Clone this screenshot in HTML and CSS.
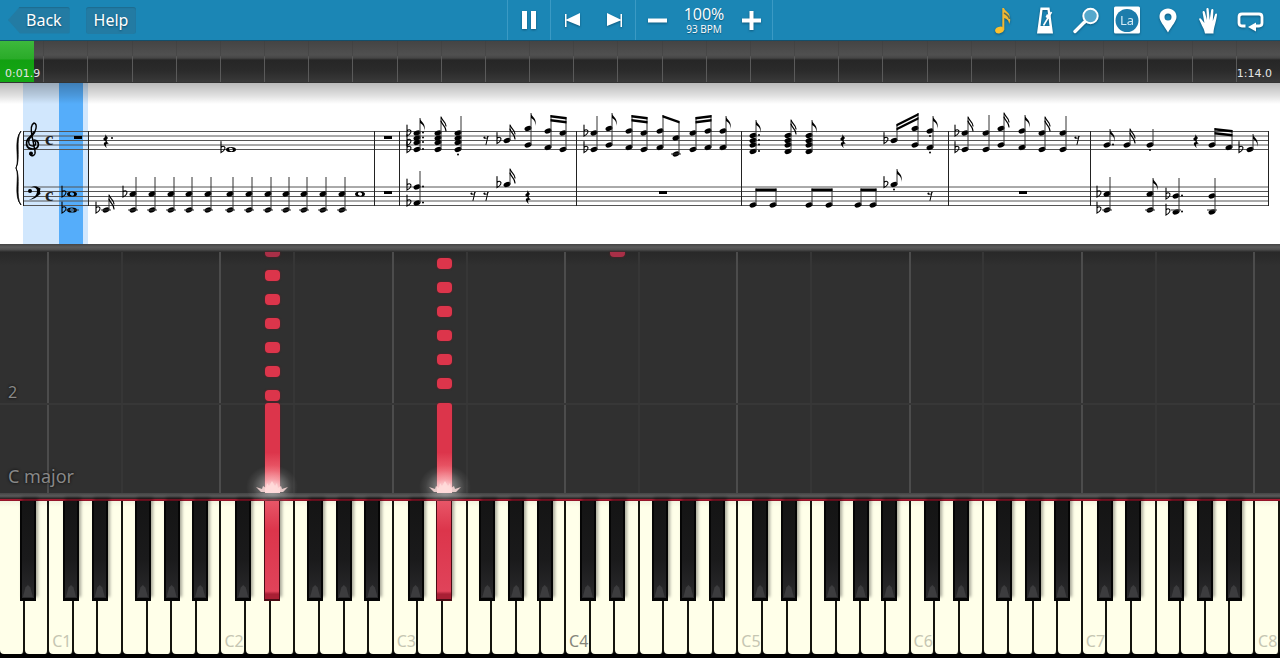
FILE: index.html
```html
<!DOCTYPE html>
<html lang="en">
<head>
	<meta charset="UTF-8">
	<meta name="viewport" content="width=device-width, initial-scale=1.0">
	<title>Piano player</title>
	<link rel="stylesheet" href="styles.css">
</head>
<body>
	<header class="toolbar">
		<div class="nav">
			<button class="nav-button back">Back</button>
			<button class="nav-button">Help</button>
		</div>
		<div class="transport">
			<div class="group">
				<button class="icon-button" aria-label="Pause">
					<svg width="24" height="24" viewBox="0 0 24 24"><path d="M5 3h5v18H5zM14 3h5v18h-5z"/></svg>
				</button>
			</div>
			<div class="group">
				<button class="icon-button" aria-label="Previous">
					<svg width="24" height="24" viewBox="0 0 24 24"><path d="M5 6h1.500v5.500L20 5v13L6.500 12.500V19H5z"/></svg>
				</button>
				<button class="icon-button" aria-label="Next">
					<svg width="24" height="24" viewBox="0 0 24 24"><path d="M20 6h-1.500v5.500L5 5v13l13.500-5.500V19H20z"/></svg>
				</button>
			</div>
			<div class="group tempo">
				<button class="icon-button" aria-label="Slower">
					<svg width="24" height="24" viewBox="0 0 24 24"><path d="M3 10.500h19v4H3z"/></svg>
				</button>
				<div class="tempo-value">
					<span class="percent">100%</span>
					<span class="bpm">93 BPM</span>
				</div>
				<button class="icon-button" aria-label="Faster">
					<svg width="24" height="24" viewBox="0 0 24 24"><path d="M3 10.500h7.500V3h4v7.500H22v4h-7.500V22h-4v-7.500H3z"/></svg>
				</button>
			</div>
		</div>
		<div class="tools">
			<button class="icon-button" aria-label="Notes">
				<svg width="28" height="30" viewBox="0 0 28 30">
					<ellipse cx="9.500" cy="25" rx="4.500" ry="3.200" transform="rotate(-20 9.500 25)" fill="#fbc02d"/>
					<path d="M12.300 25V3h1.700c.5 3 6 4.500 5.700 9 1 3 .5 5-.7 7 .2-3-1.500-5-4.700-6v12z" fill="#f0b732"/>
					<path d="M14 8c3 1.500 5 3 5.500 6" fill="none" stroke="#5c7052" stroke-width="1.500"/>
				</svg>
			</button>
			<button class="icon-button" aria-label="Metronome">
				<svg width="28" height="30" viewBox="0 0 28 30">
					<path fill-rule="evenodd" d="M9.500 2.500h9L22 28.500H6zM11.500 5l-2 16h9l-2-16z"/>
					<path d="M12.500 20.500L20.500 7" stroke="#fff" stroke-width="1.600"/>
					<path d="M16 9l3.500 2.500-2 2.500-3-2z"/>
				</svg>
			</button>
			<button class="icon-button" aria-label="Zoom">
				<svg width="28" height="30" viewBox="0 0 28 30">
					<circle cx="18.500" cy="11" r="7.200" fill="#56a8cc" stroke="#fff" stroke-width="2"/>
					<path d="M12.500 17L3 26.500" stroke="#fff" stroke-width="3.400" stroke-linecap="round"/>
				</svg>
			</button>
			<button class="icon-button" aria-label="Note names">
				<svg width="28" height="30" viewBox="0 0 28 30">
					<rect x="1" y="1.500" width="26" height="27" rx="1.500"/>
					<circle cx="14" cy="15.500" r="11.500" fill="#1d7cab"/>
					<text x="14" y="20" class="la">La</text>
				</svg>
			</button>
			<button class="icon-button" aria-label="Marker">
				<svg width="28" height="30" viewBox="0 0 28 30">
					<path fill-rule="evenodd" d="M14 3.500c5 0 8.500 3.600 8.500 8.300 0 4.500-4.500 8.700-8.500 15.700-4-7-8.500-11.200-8.500-15.700 0-4.700 3.500-8.300 8.500-8.300zM14 8.500a3.500 3.500 0 1 0 0 7 3.500 3.500 0 0 0 0-7z"/>
				</svg>
			</button>
			<button class="icon-button" aria-label="Hands">
				<svg width="28" height="30" viewBox="0 0 28 30">
					<path d="M10 28.500c-1-5-2.500-6.500-3.500-9L4.200 14.500c-.3-1.300 1.300-1.700 2-.6l3.200 4L7.600 7.500c-.2-1.600 1.700-2 2.200-.4l2.200 8-.6-10.700c0-1.800 2.100-1.800 2.300 0l1 10.500L16.200 5c.3-1.600 2.300-1.200 2.200.4L17.800 16l2.300-6.700c.6-1.300 2.200-.8 1.900.7-.8 5-1.500 8-2.500 11.500-.6 2.500-1 4.500-1 7z"/>
				</svg>
			</button>
			<button class="icon-button" aria-label="Loop">
				<svg width="28" height="30" viewBox="0 0 28 30">
					<path d="M9.500 21H6c-2 0-3-1-3-3v-6c0-2 1-3 3-3h17c2 0 3 1 3 3v6c0 2-1 3-3 3h-4" fill="none" stroke="#fff" stroke-width="2.800"/>
					<path d="M12 22l8-4.500v9z"/>
				</svg>
			</button>
		</div>
	</header>

	<div class="timeline">
		<input class="seek" type="range" min="0" max="740" value="19" aria-label="Position">
		<div class="ticks" id="ticks"></div>
		<div class="times">
			<span>0:01.9</span>
			<span>1:14.0</span>
		</div>
	</div>

	<main class="player">
		<div class="score">
			<svg id="score" viewBox="0 83 1280 161" role="img" aria-label="Score"></svg>
		</div>
		<div class="divider"></div>
		<div class="roll" id="roll">
			<div class="lanes" id="lanes"></div>
			<div class="measure"><span>2</span></div>
			<div class="key-name">C major</div>
		</div>
		<div class="ledge"></div>
		<div class="keyboard" id="keyboard"></div>
	</main>
	<script src="player.js"></script>
</body>
</html>
```
FILE: styles.css
```css
* {
    box-sizing: border-box;
}
body {
    margin: 0;
    min-height: 100vh;
    display: flex;
    flex-direction: column;
    background: #000;
    color: #fff;
    font-family: "Noto Sans", "Open Sans", sans-serif;
    overflow-x: hidden;
}
button {
    border: none;
    padding: 0;
    margin: 0;
    background: none;
    color: inherit;
    font-family: inherit;
    cursor: pointer;
}

/* toolbar */
.toolbar {
    height: 41px;
    display: grid;
    grid-template-columns: 1fr auto 1fr;
    background: #1b86b5;
    border-bottom: 1px solid #124e6b;
}
.nav {
    display: flex;
    align-items: center;
    gap: 16px;
    padding-left: 8px;
}
.nav-button {
    height: 27px;
    padding: 0 8px;
    background: #237ba3;
    border-radius: 3px;
    font-size: 16px;
    line-height: 27px;
    text-shadow: 0 1px 2px #0d4c6a;
    box-shadow: inset 0 1px 1px #1d6c90;
}
.nav-button.back {
    padding-left: 18px;
    clip-path: polygon(0 50%, 12px 0, 100% 0, 100% 100%, 12px 100%);
}
.transport,
.group,
.tools {
    display: flex;
}
.group {
    border-left: 1px solid #3b9ac4;
}
.group:last-child {
    border-right: 1px solid #3b9ac4;
}
.icon-button {
    width: 41px;
    display: flex;
    align-items: center;
    justify-content: center;
}
.icon-button svg {
    fill: #fff;
    filter: drop-shadow(0 1px 1px #0f587c);
}
.group .icon-button {
    width: 42px;
}
.tempo-value {
    width: 52px;
    display: flex;
    flex-direction: column;
    align-items: center;
    justify-content: center;
    font-family: "Open Sans", "Noto Sans", sans-serif;
    text-shadow: 0 1px 1px #0f587c;
}
.percent {
    font-size: 16px;
    line-height: 18px;
}
.bpm {
    font-size: 10px;
    line-height: 12px;
}
.tools {
    justify-content: flex-end;
    padding-right: 10px;
}
.la {
    font-size: 13px;
    text-anchor: middle;
    fill: #d5ebf5;
}

/* timeline */
.timeline {
    height: 42px;
    display: grid;
    border-bottom: 1px solid #333;
}
.timeline > * {
    grid-area: 1 / 1;
}
.seek {
    appearance: none;
    width: 100%;
    height: 41px;
    margin: 0;
    background:
        linear-gradient(#3db93c, #2aab29 44%, #12a011 46%, #14a914) no-repeat 0 0 / 34px 100%,
        linear-gradient(#444, #505050 14px, #454545 17px, #262626 19px, #2b2b2b 30px, #393939);
}
.seek::-webkit-slider-thumb {
    appearance: none;
    width: 1px;
    height: 41px;
}
.ticks {
    display: flex;
    pointer-events: none;
}
.tick {
    flex: 1;
    border-right: 1px solid;
    border-image: linear-gradient(#404040, #484848 15px, #5a5a5a 16px, #5a5a5a) 1;
}
.tick:last-child {
    border: none;
}
.times {
    display: flex;
    justify-content: space-between;
    align-items: flex-end;
    padding: 0 8px 1px 5px;
    font-family: "DejaVu Sans", sans-serif;
    font-size: 11px;
    line-height: 14px;
    color: #e4e4e4;
    pointer-events: none;
}

/* score */
.player {
    flex: 1;
    display: flex;
    flex-direction: column;
}
.score {
    position: relative;
    background: #fff;
}
.score svg {
    display: block;
    width: 100%;
}
.score::after {
    content: "";
    position: absolute;
    inset: 0 0 auto;
    height: 21px;
    background: linear-gradient(rgba(0, 0, 0, .27), rgba(0, 0, 0, .12) 60%, rgba(0, 0, 0, 0));
}
.played {
    fill: #d1e7fd;
}
.current {
    fill: #55adfa;
}
.staff line {
    stroke: #555;
    stroke-width: 1;
}
.staff .bar {
    stroke: #222;
}
.stem {
    stroke: #333;
    stroke-width: 1;
}
.ink {
    fill: #000;
}
.stroke {
    fill: none;
    stroke: #000;
    stroke-linecap: round;
}
.meter {
    font-family: "Liberation Serif", serif;
    font-weight: bold;
    font-size: 19px;
    fill: #222;
}
.divider {
    height: 8px;
    background: linear-gradient(#444, #5b5b5b 40%, #4d4d4d 70%, #2a2a2a);
}

/* falling notes */
.roll {
    position: relative;
    flex: 1;
    min-height: 241px;
    display: grid;
    background: linear-gradient(#282828, #303030 14px);
}
.lanes {
    grid-area: 1 / 1;
    display: flex;
}
.lane {
    flex: 1;
}
.lane.c,
.lane.f {
    margin-left: -2px;
    border-left: 2px solid #4c4c4c;
}
.lane.f {
    border-color: #363636;
}
.measure,
.key-name {
    position: absolute;
    left: 0;
    right: 0;
    padding-left: 8px;
    color: #888;
    text-shadow: 0 0 3px #000;
}
.measure {
    bottom: 88px;
    border-bottom: 2px solid #373737;
    font-size: 16px;
    line-height: 22px;
}
.key-name {
    bottom: 5px;
    font-size: 18px;
    line-height: 24px;
}
.note {
    position: absolute;
    width: 1.17%;
    border-radius: 4px;
    background: #dc354b;
    box-shadow: 0 0 2px #701a26;
}
.note.cut {
    border-radius: 0 0 4px 4px;
    background: #a92f47;
}
.note.long {
    border-radius: 3px 3px 0 0;
    background: linear-gradient(#dc354b 55%, #f3717c 85%, #ffc4c4);
}
.flare {
    position: absolute;
    z-index: 2;
    bottom: -8px;
    width: 60px;
    margin-left: -30px;
    pointer-events: none;
}

/* keyboard */
.ledge {
    position: relative;
    height: 8px;
    background: linear-gradient(#454545, #5a5a5a 3px, #333 5px, #301518 6px, #ae1c33 6px, #8c1428);
}
.keyboard {
    height: 157px;
    display: flex;
    padding-bottom: 4px;
    background: #000;
}
.key {
    position: relative;
    flex: 1;
    display: flex;
}
.white {
    flex: 1;
    min-width: 0;
    display: flex;
    align-items: flex-end;
    padding: 0 0 3px 3px;
    border-right: 2px solid #15150f;
    border-radius: 0 0 4px 4px;
    background: linear-gradient(#f4f4e0, #ffffe9 6px);
    font-size: 16px;
    line-height: 20px;
    color: #c6c6b2;
}
.white.middle {
    color: #85857a;
}
.black {
    position: absolute;
    z-index: 1;
    top: 0;
    width: 65%;
    height: 100px;
    border: solid #050505;
    border-width: 0 2px 3px;
    background: linear-gradient(#141414, #1a1a1b 60%, #2a2a2c);
    box-shadow: 2px -4px 3px rgba(0, 0, 0, .35);
}
.black::after {
    content: "";
    position: absolute;
    left: 1px;
    right: 1px;
    bottom: 1px;
    height: 12px;
    background: #3c3c3e;
    clip-path: polygon(50% 0, 75% 20%, 100% 100%, 0 100%, 25% 20%);
}
.black.pressed {
    border-color: #4a0c15;
    border-width: 0 1px 2px;
    background: linear-gradient(#e85668, #dc354b 30%, #e0435a 92%, #a81f34 95%);
}
.black.pressed::after {
    display: none;
}
```
FILE: player.js
```js
// ---------- timeline ----------
document.getElementById('ticks').innerHTML = '<div class="tick"></div>'.repeat(29);

// ---------- keyboard and lanes ----------
const WHITE_KEYS = 52;
const NAMES = 'ABCDEFG';
// where the sharp starts, in percent of its white key
const SHARPS = { A: 81, C: 56, D: 73, F: 48, G: 65 };
const pressed = ['D2', 'D3'];
let keys = '';
let lanes = '';
for (let i = 0; i < WHITE_KEYS; i++) {
	const name = NAMES[i % 7];
	const octave = Math.floor((i + 5) / 7);
	const id = name + octave;
	const label = name === 'C' ? id : '';
	let sharp = '';
	if (SHARPS[name] && i < WHITE_KEYS - 1) {
		const cls = pressed.includes(id) ? 'black pressed' : 'black';
		sharp = `<button class="${cls}" style="left:${SHARPS[name]}%" aria-label="${id} sharp"></button>`;
	}
	keys += `<div class="key"><button class="white${id === 'C4' ? ' middle' : ''}" aria-label="${id}">${label}</button>${sharp}</div>`;
	lanes += `<div class="lane${name === 'C' ? ' c' : name === 'F' ? ' f' : ''}"></div>`;
}
document.getElementById('keyboard').innerHTML = keys;
document.getElementById('lanes').innerHTML = lanes;

// ---------- falling notes: [lane in px of 1280, bottom, height] ----------
const falling = [];
for (let i = 0; i < 6; i++) {
	falling.push([265, 92 + i * 24, 11], [437, 104 + i * 24, 11]);
}
falling.push([265, 236, 5], [610, 236, 5], [265, 0, 90], [437, 0, 90]);
let html = '';
falling.forEach(([x, bottom, height]) => {
	const cls = height > 20 ? ' long' : height < 10 ? ' cut' : '';
	html += `<div class="note${cls}" style="left:${x / 12.8}%;bottom:${bottom}px;height:${height}px"></div>`;
});
[272, 445].forEach((x, i) => {
	html += `<svg class="flare" style="left:${x / 12.8}%" viewBox="0 0 60 50">
		<defs><radialGradient id="glow${i}"><stop offset="0" stop-color="#fff" stop-opacity=".6"/><stop offset=".4" stop-color="#fff" stop-opacity=".3"/><stop offset=".75" stop-color="#fff" stop-opacity=".08"/><stop offset="1" stop-color="#fff" stop-opacity="0"/></radialGradient></defs>
		<ellipse cx="30" cy="36" rx="26" ry="22" fill="url(#glow${i})"/>
		<path d="M19 41l-5-5 6 2 1-3 3 2 1-5 2 3 3-5 3 5 2-3 1 5 3-2 1 3 6-2-5 5z" fill="#ffdcdb" fill-opacity=".85"/>
	</svg>`;
});
document.getElementById('roll').insertAdjacentHTML('beforeend', html);

// ---------- score ----------
let out = '';
const line = (x1, y1, x2, y2, cls) => { out += `<line class="${cls}" x1="${x1}" y1="${y1}" x2="${x2}" y2="${y2}"/>`; };
const path = (d, cls, extra = '') => { out += `<path class="${cls}" d="${d}" ${extra}/>`; };
const dot = (x, y) => { out += `<circle class="ink" cx="${x}" cy="${y}" r="1"/>`; };
const flat = (x, y) => path(`M${x - 2} ${y - 8}V${y + 3}c4-2 5-5 3-6-1-.5-2 0-3 1`, 'stroke', 'stroke-width="1.1"');
const head = (x, y) => {
	out += `<ellipse class="ink" cx="${x}" cy="${y}" rx="3.600" ry="2.400" transform="rotate(-20 ${x} ${y})"/>`;
	if (y > 208 || (y > 152 && y < 160)) line(x - 5, y > 208 ? 210 : 154, x + 5, y > 208 ? 210 : 154, 'stem');
};
const whole = (x, y) => {
	path(`M${x - 5} ${y}a5 2.600 0 1 0 10 0a5 2.600 0 1 0-10 0zM${x - 2} ${y - .8}a2 1.500 20 1 1 4 1.600a2 1.500 20 1 1-4-1.600z`, 'ink', 'fill-rule="evenodd"');
	if (y > 208) line(x - 7, y, x + 7, y, 'stem');
};
const wholeRest = (x, y) => { out += `<rect class="ink" x="${x - 4}" y="${y - 1.5}" width="8" height="3"/>`; };
const quarterRest = (x, y) => path(`M${x - 1} ${y - 5}l3 4c-2 2-2 3 1 6-3-1-4 1-2 4-4-3-4-6-1-6l-3-3c2-2 3-3 2-5z`, 'ink');
const eighthRest = (x, y) => {
	dot(x - 1.5, y - 2.5);
	path(`M${x - 2} ${y - 2}c2 1 4 0 4-2L${x} ${y + 4.5}`, 'stroke', 'stroke-width="1"');
};
// flags: 0, 1 or 2
const chord = (x, ys, top, flags = 0) => {
	ys.forEach(y => head(x, y));
	line(x + 3, ys[ys.length - 1], x + 3, top, 'stem');
	if (flags === 1) path(`M${x + 3} ${top}c0 4 7 5 4 13c1-5-2-7-4-8z`, 'ink');
	if (flags === 2) {
		path(`M${x + 3} ${top - 1}c1 4 5 5 5 9M${x + 3} ${top + 3}c1 4 5 5 5 10`, 'stroke', 'stroke-width="1.2"');
	}
};
const beam = (x1, y1, x2, y2, count) => {
	for (let i = 0; i < count; i++) {
		const a = y1 + i * 4, b = y2 + i * 4;
		path(`M${x1} ${a}L${x2} ${b}v2.500L${x1} ${a + 2.5}z`, 'ink');
	}
};
const pair = (x1, ys1, x2, ys2, y1, y2, count) => {
	chord(x1, ys1, y1);
	chord(x2, ys2, y2);
	beam(x1 + 2.5, y1, x2 + 3.5, y2, count);
};

out += '<rect class="played" x="23" y="83" width="65" height="161"/><rect class="current" x="59" y="83" width="24" height="161"/>';
out += '<g class="staff">';
[131.5, 136, 140.5, 145, 149.5, 187, 191.5, 196.5, 201, 205.5].forEach(y => line(23, y, 1268, y, 'rule'));
[23.5, 88.5, 374.5, 399.5, 576.5, 741.5, 948.5, 1090.5, 1268.5].forEach(x => line(x, 131, x, 206, 'bar'));
out += '</g>';

// brace, clefs and meter
path('M21 131c-6 8 0 28-5 37 5 9-1 29 5 37-8-9-1-29-5-37 4-8-3-28 5-37z', 'ink', 'stroke="#000" stroke-width=".8"');
path('M33 141c3-1 4 5 0 5-5 0-6-6-1-10 4-4 6-12 2-13-4 2-3 8-2 13l3 15c1 5-4 6-5 3', 'stroke', 'stroke-width="1.400"');
path('M34 140c6 0 6 9-1 9-8 0-8-8-3-12l4-5', 'stroke', 'stroke-width="1.700"');
out += '<circle class="ink" cx="31" cy="153.500" r="2"/>';
path('M29 191c0-5 8-5 8 0 0 5-4 7-8 9 9-2 12-6 11-10-1-5-10-5-11 1z', 'ink');
out += '<circle class="ink" cx="30" cy="191" r="2"/>';
dot(39.5, 189); dot(39.5, 193.5);
out += '<text class="meter" x="45" y="145">c</text><text class="meter" x="45" y="201">c</text>';

const EB = [133, 149.5];
const FF = [131, 147.5];
const GG = [128.5, 145];
const LOW = [194, 210];
const STACK = [133, 138, 142.5, 149.5];
const STACK2 = [135.5, 140.5, 145, 151.5];

// treble
wholeRest(78, 137.5);
quarterRest(106, 139); dot(112, 138);
flat(223, 149.5); whole(231, 149.5);
wholeRest(388, 137.5);
[133, 142.5, 149.5].forEach(y => flat(409, y));
chord(417, STACK, 118, 1); STACK.forEach(y => dot(423, y - .5));
chord(438, STACK, 118, 2);
chord(458, STACK, 116); dot(458, 154.5);
eighthRest(486, 140);
flat(499, 140.5); chord(507, [140.5], 126, 2);
chord(528, GG, 113, 1);
pair(548, FF, 563, EB, 115, 117, 2);
EB.forEach(y => flat(586, y));
chord(594, EB, 116);
chord(609, GG, 113, 1);
pair(629, FF, 644, EB, 115, 117, 2);
pair(660, FF, 676, [138, 154], 115, 121, 1);
pair(693, EB, 708, FF, 117, 115, 2);
chord(723, FF, 116, 1);
chord(753, STACK2, 120, 1); STACK2.forEach(y => dot(759, y - .5));
chord(788, STACK2, 121, 2);
chord(809, STACK2, 120, 1);
quarterRest(843, 139);
flat(886, 140.5);
pair(894, [140.5], 915, GG, 124, 113, 2);
chord(930, FF, 116, 1); dot(930, 136); dot(930, 152.5);
EB.forEach(y => flat(957, y));
chord(965, EB, 118, 2);
chord(986, EB, 115);
chord(1001, GG, 114, 2);
chord(1022, FF, 115, 1);
chord(1042, EB, 118, 2);
chord(1063, EB, 116);
eighthRest(1077, 140);
chord(1107, [145], 129, 1); dot(1113, 144.5);
chord(1127, [145], 130, 2);
chord(1150, [145], 129); dot(1150, 150);
quarterRest(1196, 139);
pair(1212, [145], 1229, [147.5], 128, 130, 2);
flat(1241, 149.5); chord(1250, [149.5], 134, 1);

// bass
LOW.forEach(y => { flat(64, y); whole(72, y); });
flat(98, 210); chord(106, [210], 196, 2);
flat(125, 194);
[133, 152, 171, 189, 208, 230, 249, 268, 286, 304, 323, 342].forEach(x => chord(x, LOW, 177));
whole(360, 194);
wholeRest(388, 192.5);
[187, 203].forEach(y => { flat(409, y); dot(423, y - .5); });
chord(417, [187, 203], 171);
eighthRest(473, 196); eighthRest(486, 196);
flat(499, 184.5); chord(507, [184.5], 170, 2);
quarterRest(528, 195);
wholeRest(663, 192.5);
pair(753, [205], 773, [205], 188.5, 188.5, 1);
pair(809, [205], 829, [205], 188.5, 188.5, 1);
pair(858, [205], 873, [205], 188.5, 188.5, 1);
flat(886, 184.5); chord(894, [184.5], 169, 1); dot(894, 189.5);
eighthRest(930, 196);
wholeRest(1023, 192.5);
LOW.forEach(y => flat(1099, y));
chord(1107, LOW, 177);
chord(1150, LOW, 178, 1);
[196, 212].forEach(y => { flat(1168, y); dot(1182, y - .5); });
chord(1176, [196, 212], 178);
chord(1212, [196, 212], 178);
document.getElementById('score').innerHTML = out;
```
